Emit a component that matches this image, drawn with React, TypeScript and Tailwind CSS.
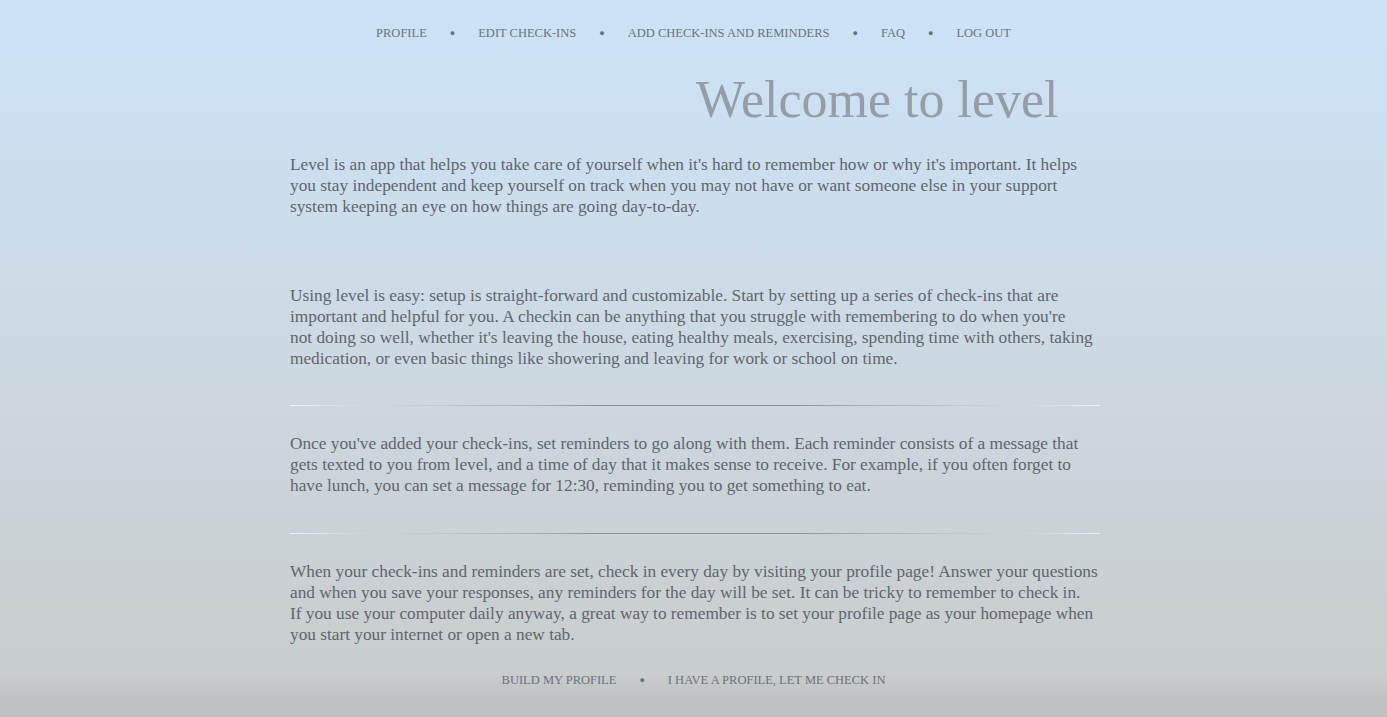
import React from 'react';

const navItems = ['Profile', 'Edit Check-ins', 'Add Check-ins and Reminders', 'FAQ', 'Log Out'];
const bottomLinks = ['Build My Profile', 'I have a profile, let me check in'];

const Dot = () => <span className="mx-[23px] text-[9px] text-[#6b7178]">●</span>;

const Divider = () => (
  <div className="h-px w-[810px] bg-[linear-gradient(to_right,rgba(235,245,255,0.9)_0%,rgba(235,245,255,0.2)_7%,rgba(200,205,210,0.3)_12%,rgba(150,155,160,0.6)_30%,#8a9096_38%,#8a9096_62%,rgba(150,155,160,0.6)_72%,rgba(200,205,210,0.3)_88%,rgba(235,245,255,0.2)_93%,rgba(235,245,255,0.9)_100%)]" />
);

const Lines = ({ lines }: { lines: string[] }) => (
  <p className="whitespace-nowrap">
    {lines.map((l, i) => (
      <React.Fragment key={i}>
        {l}
        {i < lines.length - 1 && <br />}
      </React.Fragment>
    ))}
  </p>
);

const Welcome: React.FC = () => {
  return (
    <div className="h-[717px] overflow-hidden bg-[linear-gradient(to_bottom,#cce2f6_0%,#cce0f2_15%,#cddae4_45%,#cbd3d8_70%,#c9cdcd_94%,#bfc3c5_97%,#bcc0c3_100%)] font-['Liberation_Serif',serif] text-[#5f666d]">
      {/* Nav */}
      <nav className="flex justify-center pt-[25px] text-[12.5px] uppercase leading-[16px] text-[#6d7379]">
        {navItems.map((item, i) => (
          <span key={item} className="flex items-center">
            {i > 0 && <Dot />}
            <span>{item}</span>
          </span>
        ))}
      </nav>

      {/* Title */}
      <h1 className="mt-[25px] pl-[696px] text-[52px] leading-[68px] text-[#959ea6]">Welcome to level</h1>

      <div className="ml-[290px] mt-[20px] text-[17.3px] leading-[21px]">
        <Lines
          lines={[
            "Level is an app that helps you take care of yourself when it's hard to remember how or why it's important. It helps",
            'you stay independent and keep yourself on track when you may not have or want someone else in your support',
            'system keeping an eye on how things are going day-to-day.',
          ]}
        />

        <div className="mt-[68px]">
          <Lines
            lines={[
              'Using level is easy: setup is straight-forward and customizable. Start by setting up a series of check-ins that are',
              "important and helpful for you. A checkin can be anything that you struggle with remembering to do when you're",
              "not doing so well, whether it's leaving the house, eating healthy meals, exercising, spending time with others, taking",
              'medication, or even basic things like showering and leaving for work or school on time.',
            ]}
          />
        </div>

        <div className="mt-[36px] mb-[27px]">
          <Divider />
        </div>

        <Lines
          lines={[
            "Once you've added your check-ins, set reminders to go along with them. Each reminder consists of a message that",
            'gets texted to you from level, and a time of day that it makes sense to receive. For example, if you often forget to',
            'have lunch, you can set a message for 12:30, reminding you to get something to eat.',
          ]}
        />

        <div className="mt-[37px] mb-[27px]">
          <Divider />
        </div>

        <Lines
          lines={[
            'When your check-ins and reminders are set, check in every day by visiting your profile page! Answer your questions',
            'and when you save your responses, any reminders for the day will be set. It can be tricky to remember to check in.',
            'If you use your computer daily anyway, a great way to remember is to set your profile page as your homepage when',
            'you start your internet or open a new tab.',
          ]}
        />
      </div>

      {/* Bottom links */}
      <div className="mt-[27px] flex justify-center text-[12.5px] uppercase leading-[16px] text-[#6d7379]">
        {bottomLinks.map((item, i) => (
          <span key={item} className="flex items-center">
            {i > 0 && <Dot />}
            <span>{item}</span>
          </span>
        ))}
      </div>
    </div>
  );
};

export default Welcome;
